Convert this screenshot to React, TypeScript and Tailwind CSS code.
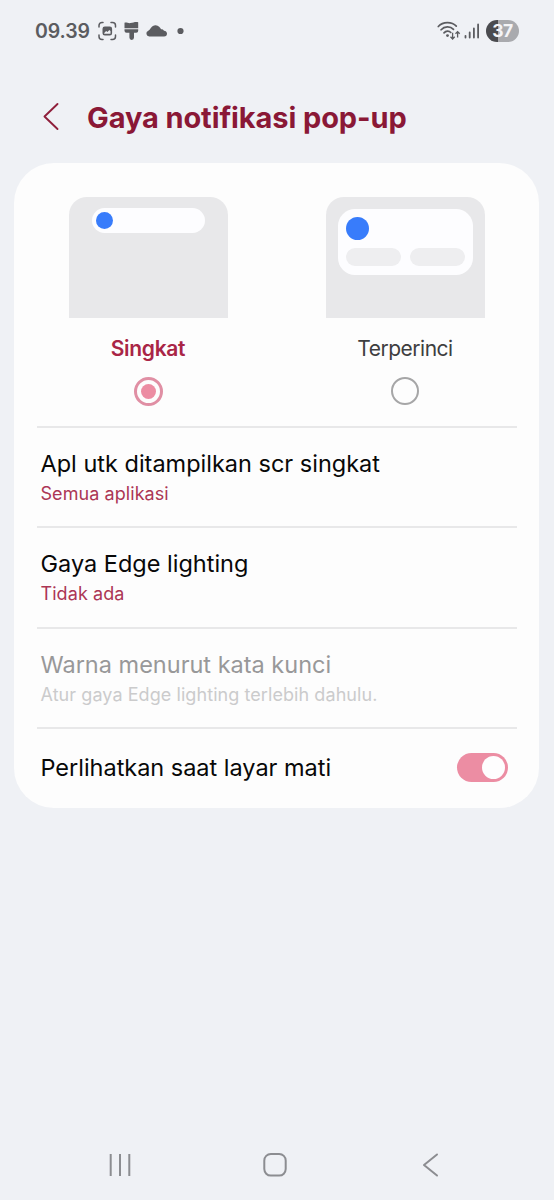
import type { ReactNode } from "react";

export default function App() {
  return (
    <div className="flex h-[1200px] w-[554px] flex-col overflow-hidden bg-[#eff1f5] font-['Inter','Roboto',sans-serif]">
      <StatusBar />

      <header className="flex h-[103px] items-center pt-[11px] pl-[42px]">
        <svg width="18" height="30" viewBox="0 0 18 30" fill="none" aria-hidden="true">
          <path
            d="M15.5 2 2.500 14.500l13 12.500"
            stroke="#8f1f3b"
            strokeWidth="1.9"
            strokeLinecap="round"
            strokeLinejoin="round"
          />
        </svg>
        <h1 className="mt-[2px] ml-[27px] text-[29px] leading-9 font-bold tracking-[-0.1px] whitespace-nowrap text-[#8a1836]">
          Gaya notifikasi pop-up
        </h1>
      </header>

      <main className="mr-[15px] ml-[14px] h-[645px] rounded-[40px] bg-[#fdfdfd] pt-[34px]">
        <div className="flex h-[228.5px] justify-center">
          <StyleOption label="Singkat" selected>
            <div className="mt-[11px] ml-[23px] flex h-[25px] w-[113px] items-center rounded-full bg-[#fdfdff] pl-[4px]">
              <span className="size-[17px] rounded-full bg-[#387cfb]" />
            </div>
          </StyleOption>
          <StyleOption label="Terperinci">
            <div className="mt-[11.5px] ml-3 h-[66px] w-[135px] rounded-[17px] bg-[#fdfdff] px-[8px] pt-[8px]">
              <span className="block size-[23.5px] rounded-full bg-[#387cfb]" />
              <div className="mt-[8px] flex justify-between">
                <span className="h-[17.5px] w-[55px] rounded-full bg-[#eeeef0]" />
                <span className="h-[17.5px] w-[55px] rounded-full bg-[#eeeef0]" />
              </div>
            </div>
          </StyleOption>
        </div>

        <div className="mr-[22px] ml-[23px]">
          <SettingRow
            title={<span>Apl utk ditampilkan scr singkat</span>}
            detail={<span className="text-[#ac3655]">Semua aplikasi</span>}
          />
          <SettingRow
            title={<span>Gaya Edge lighting</span>}
            detail={<span className="text-[#ac3655]">Tidak ada</span>}
          />
          <SettingRow
            title={<span className="text-[#989899]">Warna menurut kata kunci</span>}
            detail={<span className="text-[#cbcbcc]">Atur gaya Edge lighting terlebih dahulu.</span>}
          />
          <div className="flex h-[80px] items-center justify-between border-t-2 border-[#e8e8e9] pr-[9px] pl-[3.5px]">
            <span className="text-[23.5px] leading-8 tracking-[-0.02px] whitespace-nowrap text-[#080808]">
              Perlihatkan saat layar mati
            </span>
            <button
              role="switch"
              aria-checked="true"
              aria-label="Perlihatkan saat layar mati"
              className="mb-[1px] flex h-[29px] w-[51px] items-center justify-end rounded-full bg-[#ec8da3] pr-[3px]"
            >
              <span className="size-[23px] rounded-full bg-[#fefdfe]" />
            </button>
          </div>
        </div>
      </main>

      <NavigationBar />
    </div>
  );
}

function StatusBar() {
  return (
    <div className="flex h-[60px] items-center justify-between pt-[1px] pr-[35px] pl-[35px] text-[#5b5c60]">
      <div className="flex items-center">
        <span className="w-[55px] text-[19.5px] leading-6 font-semibold tracking-[-0.1px] whitespace-nowrap">
          09.39
        </span>
        <svg className="ml-[7px]" width="90" height="20" viewBox="0 0 90 20" fill="none" aria-hidden="true">
          {/* screenshot */}
          <path
            d="M2 6V4.500a3 3 0 0 1 3-3h1M14 1.500h1.500a3 3 0 0 1 3 3V6M18.500 14v1.500a3 3 0 0 1-3 3H14M6 18.500H5a3 3 0 0 1-3-3V14"
            stroke="currentColor"
            strokeWidth="1.5"
            strokeLinecap="round"
          />
          <path
            fillRule="evenodd"
            d="M7.800 5.500h5a2.300 2.300 0 0 1 2.300 2.300v4.400a2.300 2.300 0 0 1-2.300 2.300h-5a2.300 2.300 0 0 1-2.300-2.300V7.800a2.300 2.300 0 0 1 2.300-2.300Zm-.6 6.600 1.900-2 1.400.9 1.800-1.900 1.200.8v2.800H7.200Z"
            fill="currentColor"
          />
          {/* paint brush */}
          <path
            d="M27.500 1.800c2-.7 3.500.6 6 .3 2.700-.4 4.600-1.500 7.700-.9v6H27.500ZM27.500 8.300h13.700v1.400a2 2 0 0 1-2 2H37v4.900a2.300 2.300 0 0 1-4.600 0v-4.900h-2.900a2 2 0 0 1-2-2Z"
            fill="currentColor"
          />
          {/* cloud */}
          <path
            d="M52.300 15.500a3 3 0 0 1-1-5.800c1.800-.6 3.200-5.400 7.200-5.500 3-.1 4.700 2.300 5.600 4 1.500-.1 2.500.6 2.900 1.500 2 .2 3 1.500 3 2.900a2.900 2.900 0 0 1-2.900 2.900Z"
            fill="currentColor"
          />
          <circle cx="83.500" cy="10" r="3.100" fill="currentColor" />
        </svg>
      </div>

      <div className="flex items-center">
        <svg width="45" height="20" viewBox="0 0 45 20" fill="none" stroke="currentColor" aria-hidden="true">
          {/* wifi with traffic arrows */}
          <g strokeWidth="1.700" strokeLinecap="round">
            <path d="M1.300 5.500C6 .4 14.800.4 19.300 5.200" />
            <path d="M4.100 8.800C7.500 5 13.200 4.900 16.500 8.300" />
            <path d="M7 11.900c2-2.200 5-2.200 6.800-.4" />
          </g>
          <circle cx="10.500" cy="14.600" r="1.400" fill="currentColor" stroke="none" />
          <path
            d="M15.600 11.800v6M13.500 15.800l2.100 2.200 2.100-2.200M20.600 16.500V10.800M18.500 12.800l2.100-2.200 2.100 2.200"
            strokeWidth="1.300"
          />
          {/* mobile signal */}
          <g strokeWidth="1.800" strokeLinecap="round">
            <path d="M28.500 14.800v1.700M32.700 11.500v5M36.900 7.500v9M41.100 3.500v13" />
          </g>
        </svg>
        <div className="ml-[4px] flex h-[22px] w-[33px] items-center justify-center rounded-full bg-linear-to-r from-[#4a4b4f] from-36% to-[#a9aaae] to-36% pt-[1px] text-[17.5px] leading-none font-bold tracking-[-0.6px] text-[#f4f4f6]">
          37
        </div>
      </div>
    </div>
  );
}

function StyleOption({
  label,
  selected,
  children,
}: {
  label: string;
  selected?: boolean;
  children: ReactNode;
}) {
  return (
    <div className="flex w-[257px] flex-col items-center">
      <div className="flex h-[121px] w-[159px] items-start rounded-t-[18px] bg-[#e8e8ea]">{children}</div>
      <span
        className={
          selected
            ? "mt-[17px] text-[21px] leading-7 font-semibold tracking-[-0.3px] text-[#a92546]"
            : "mt-[17px] text-[21px] leading-7 tracking-[-0.5px] text-[#3e3e40]"
        }
      >
        {label}
      </span>
      {selected ? (
        <span className="mt-[14px] flex size-[29px] items-center justify-center rounded-full border-[3px] border-[#e08fa4]">
          <span className="size-[15px] rounded-full bg-[#ec8da3]" />
        </span>
      ) : (
        <span className="mt-[14px] size-[28px] rounded-full border-2 border-[#a6a6a7]" />
      )}
    </div>
  );
}

function SettingRow({ title, detail }: { title: ReactNode; detail: ReactNode }) {
  return (
    <div className="flex h-[100.5px] flex-col border-t-2 border-[#e8e8e9] pt-[20px] pl-[3.5px] whitespace-nowrap">
      <div className="text-[23.5px] leading-8 text-[#080808]">{title}</div>
      <div className="mt-[2px] text-[18px] leading-6 tracking-[0.07px]">{detail}</div>
    </div>
  );
}

function NavigationBar() {
  return (
    <nav className="mt-auto flex h-[70px] items-center pl-[108px] text-[#8c8d91]">
      <svg width="332" height="28" viewBox="0 0 332 28" fill="none" stroke="currentColor" strokeWidth="2" aria-hidden="true">
        <path d="M2.700 3v22M12 3v22M21.300 3v22" />
        <rect x="156.300" y="3" width="21.400" height="21.600" rx="6.500" />
        <path d="M329 3.500 316 14 329 24.500" strokeLinecap="round" strokeLinejoin="round" />
      </svg>
    </nav>
  );
}
